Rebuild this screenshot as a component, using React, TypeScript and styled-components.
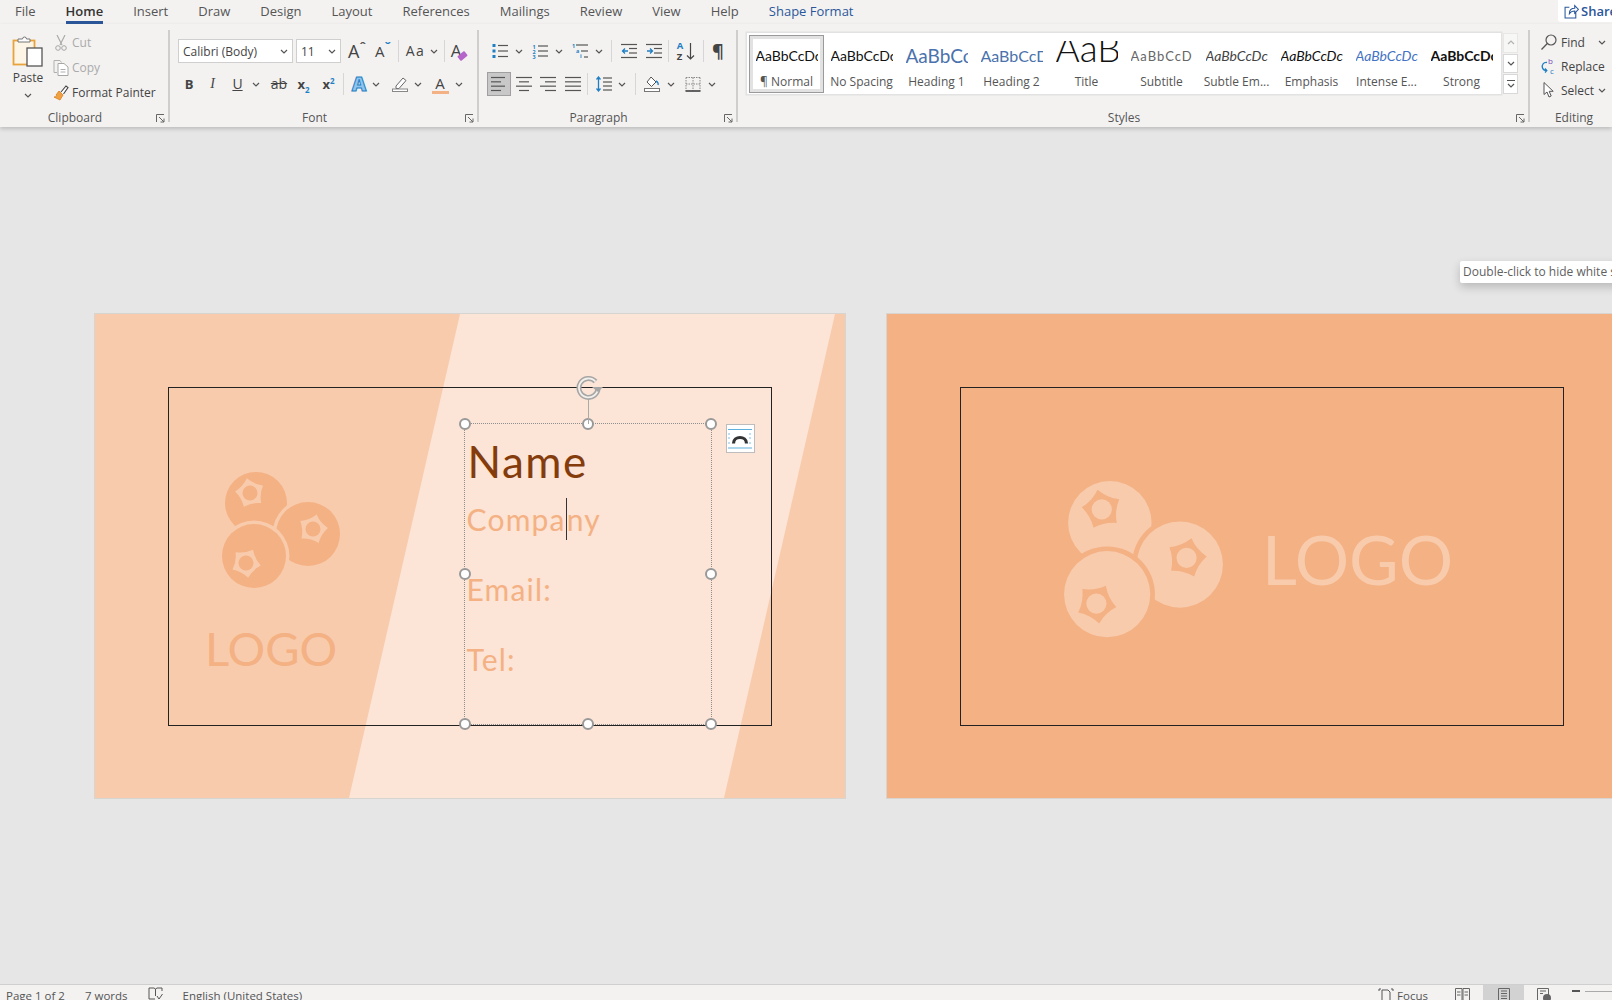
import { ReactNode } from "react";
import styled, { createGlobalStyle } from "styled-components";

const UI = `"Open Sans", "Noto Sans", "Liberation Sans", sans-serif`;
const DOC = `Lato, "Liberation Sans", sans-serif`;

const Global = createGlobalStyle`
    html, body { margin: 0; padding: 0; overflow: hidden; background: #e6e6e6; }
    #root { width: 1612px; height: 1000px; }
    * { box-sizing: border-box; }
`;

const TABS = ["File", "Home", "Insert", "Draw", "Design", "Layout", "References", "Mailings", "Review", "View", "Help"];

const STYLES = [
    { text: "AaBbCcDc", label: "¶ Normal", color: "#111", size: 14 },
    { text: "AaBbCcDc", label: "No Spacing", color: "#111", size: 14 },
    { text: "AaBbCc", label: "Heading 1", color: "#4a72ac", size: 19 },
    { text: "AaBbCcD", label: "Heading 2", color: "#4a72ac", size: 16 },
    { text: "AaB", label: "Title", color: "#111", size: 37, lh: 14, weight: 300 },
    { text: "AaBbCcD", label: "Subtitle", color: "#666", size: 13, spacing: 1 },
    { text: "AaBbCcDc", label: "Subtle Em...", color: "#444", size: 14, italic: true },
    { text: "AaBbCcDc", label: "Emphasis", color: "#111", size: 14, italic: true },
    { text: "AaBbCcDc", label: "Intense E...", color: "#4472c4", size: 14, italic: true },
    { text: "AaBbCcDc", label: "Strong", color: "#111", size: 14, weight: 700 },
];

function Chevron() {
    return (
        <ChevronSvg viewBox="0 0 8 5">
            <path d="M1 1l3 3 3-3" fill="none" stroke="#555" strokeWidth="1.2" />
        </ChevronSvg>
    );
}

function Launcher() {
    return (
        <LauncherSvg viewBox="0 0 9 9">
            <path d="M.5 8V.5H8M3 3l5 5M8 4.5V8H4.5" fill="none" stroke="#666" strokeWidth="1" />
        </LauncherSvg>
    );
}

function Lines({ rows }: { rows: [number, number][] }) {
    return (
        <Icon16 viewBox="0 0 16 16">
            {rows.map(([a, b], i) => (
                <line key={i} x1={a} x2={b} y1={1.5 + i * (13 / (rows.length - 1))} y2={1.5 + i * (13 / (rows.length - 1))} stroke="#555" strokeWidth="1.2" />
            ))}
        </Icon16>
    );
}

function Bullets({ color = "#1f7fc4" }: { color?: string }) {
    return (
        <Icon16 viewBox="0 0 16 16">
            {[2.5, 8, 13.5].map((y) => (
                <g key={y}>
                    <rect x="0.5" y={y - 1.5} width="3" height="3" fill={color} />
                    <line x1="6" x2="16" y1={y} y2={y} stroke="#555" strokeWidth="1.2" />
                </g>
            ))}
        </Icon16>
    );
}

function Numbered() {
    return (
        <Icon16 viewBox="0 0 16 16">
            {[3, 8, 13].map((y, i) => (
                <g key={y}>
                    <SmallNum x="0.5" y={y + 2.5}>{i + 1}</SmallNum>
                    <line x1="6" x2="16" y1={y} y2={y} stroke="#555" strokeWidth="1.2" />
                </g>
            ))}
        </Icon16>
    );
}

function Multilevel() {
    return (
        <Icon16 viewBox="0 0 16 16">
            <SmallNum x="0" y="5">1</SmallNum>
            <SmallNum x="4" y="10">a</SmallNum>
            <SmallNum x="8" y="15">i</SmallNum>
            <line x1="4" x2="16" y1="2" y2="2" stroke="#555" strokeWidth="1.2" />
            <line x1="9" x2="16" y1="8" y2="8" stroke="#555" strokeWidth="1.2" />
            <line x1="12" x2="16" y1="14" y2="14" stroke="#555" strokeWidth="1.2" />
        </Icon16>
    );
}

function Indent({ flip }: { flip?: boolean }) {
    return (
        <Icon16 viewBox="0 0 16 16">
            <line x1="0" x2="16" y1="1.5" y2="1.5" stroke="#555" strokeWidth="1.2" />
            <line x1="8" x2="16" y1="5.5" y2="5.5" stroke="#555" strokeWidth="1.2" />
            <line x1="8" x2="16" y1="10" y2="10" stroke="#555" strokeWidth="1.2" />
            <line x1="0" x2="16" y1="14.5" y2="14.5" stroke="#555" strokeWidth="1.2" />
            <path d={flip ? "M1 8h5M4 5.5L6.5 8 4 10.5" : "M7 8H1.5M4 5.5L1.5 8 4 10.5"} fill="none" stroke="#1f7fc4" strokeWidth="1.3" />
        </Icon16>
    );
}

function LineSpacing() {
    return (
        <Icon16 viewBox="0 0 16 16">
            <path d="M2.5 1v14M.5 3.5l2-2.5 2 2.5M.5 12.500l2 2.500 2-2.500" fill="none" stroke="#1f7fc4" strokeWidth="1.3" />
            {[2, 6, 10, 14].map((y) => (
                <line key={y} x1="7" x2="16" y1={y} y2={y} stroke="#555" strokeWidth="1.2" />
            ))}
        </Icon16>
    );
}

function Shading() {
    return (
        <Icon16 viewBox="0 0 16 16">
            <path d="M7 1l5 5-4.500 4.500L3 6z" fill="#fff" stroke="#555" strokeWidth="1" />
            <path d="M12 5c2 1 2.500 3 2 4" fill="none" stroke="#1f7fc4" strokeWidth="1.4" />
            <rect x="0.500" y="12.500" width="15" height="3" fill="#fff" stroke="#777" />
        </Icon16>
    );
}

function Borders() {
    return (
        <Icon16 viewBox="0 0 16 16">
            <path d="M1 1.500h14M1 1.500v13M15 1.500v13M8 1.500v13M1 8h14" fill="none" stroke="#888" strokeWidth="1" strokeDasharray="1.500 1" />
            <line x1="0.500" x2="15.500" y1="15" y2="15" stroke="#333" strokeWidth="1.500" />
        </Icon16>
    );
}

function Highlighter() {
    return (
        <Icon16 viewBox="0 0 16 16">
            <path d="M4 10l7-8 3 2.500-7 8H4z" fill="#fff" stroke="#666" strokeWidth="1" />
            <rect x="0.500" y="13" width="15" height="2.500" fill="#fff" stroke="#888" />
        </Icon16>
    );
}

function PasteIcon() {
    return (
        <svg width="32" height="32" viewBox="0 0 32 32">
            <rect x="1.500" y="5.500" width="21" height="24" fill="#fdf6e6" stroke="#e9a33c" strokeWidth="1.800" />
            <path d="M6 7V4h4.500a2 2 0 0 1 4 0H18v3z" fill="#fff" stroke="#777" />
            <rect x="15" y="13" width="15" height="18" fill="#fff" stroke="#555" strokeWidth="1.300" />
        </svg>
    );
}

function CutIcon() {
    return (
        <Icon16 viewBox="0 0 16 16">
            <path d="M4 0l5 10M12 0L7 10" fill="none" stroke="#a6a6a6" strokeWidth="1.100" />
            <circle cx="5" cy="13" r="2.300" fill="none" stroke="#a6a6a6" />
            <circle cx="11" cy="13" r="2.300" fill="none" stroke="#a6a6a6" />
        </Icon16>
    );
}

function CopyIcon() {
    return (
        <Icon16 viewBox="0 0 16 16">
            <path d="M1 .500h6l1.500 2M1 .500v12h3" fill="none" stroke="#b0b0b0" />
            <path d="M5 3.500h6l4 3.500v8.500H5z" fill="#fff" stroke="#a6a6a6" />
            <path d="M7.500 9.500h5M7.500 12h5" stroke="#b0b0b0" />
        </Icon16>
    );
}

function PainterIcon() {
    return (
        <Icon16 viewBox="0 0 16 16">
            <path d="M6 6l4 4-3 5-6-3c2 0 3-1 2-2z" fill="#f0a041" stroke="#d87f1c" strokeWidth=".8" />
            <path d="M8 7l5-6 2 1.500-4.500 6.500" fill="#fff" stroke="#444" strokeWidth="1.100" />
        </Icon16>
    );
}

function FindIcon() {
    return (
        <Icon16 viewBox="0 0 16 16">
            <circle cx="10" cy="6" r="5" fill="none" stroke="#555" strokeWidth="1.200" />
            <line x1="6.300" y1="9.500" x2="0.500" y2="15.500" stroke="#555" strokeWidth="1.300" />
        </Icon16>
    );
}

function ReplaceIcon() {
    return (
        <Icon16 viewBox="0 0 16 16">
            <path d="M6 4.500C2.500 4 .5 7 1.500 10c.5 1.500 2 2.500 4 2.500M4 10.500l1.800 2-1.800 2" fill="none" stroke="#1f7fc4" strokeWidth="1.300" />
            <ReplaceLetter x="7" y="6" $color="#7a4fb5">b</ReplaceLetter>
            <ReplaceLetter x="9" y="15.500" $color="#1f7fc4">c</ReplaceLetter>
        </Icon16>
    );
}

function SelectIcon() {
    return (
        <Icon16 viewBox="0 0 16 16">
            <path d="M3 .500v12l3-2.500 2 5 2.200-1-2-4.700h4z" fill="#fff" stroke="#555" strokeWidth="1" />
        </Icon16>
    );
}

function starPath(cx: number, cy: number, R: number, r: number, rot: number) {
    let d = "";
    for (let i = 0; i < 5; i++) {
        const a = ((rot + i * 72 - 90) * Math.PI) / 180;
        const b = a + (36 * Math.PI) / 180;
        const c = a + (72 * Math.PI) / 180;
        d += `${i === 0 ? `M${cx + R * Math.cos(a)} ${cy + R * Math.sin(a)}` : ""}Q${cx + r * Math.cos(b)} ${cy + r * Math.sin(b)} ${cx + R * Math.cos(c)} ${cy + R * Math.sin(c)}`;
    }
    return d + "Z";
}

function Berries({ fg, bg, size }: { fg: string; bg: string; size: number }) {
    const berries = [
        { x: 40, y: 40, r: 31, sx: 34, sy: 30, rot: -12 },
        { x: 92, y: 71, r: 32, sx: 97, sy: 66, rot: 14 },
        { x: 38, y: 93, r: 32, sx: 30, sy: 100, rot: 28 },
    ];
    return (
        <svg width={size} height={size} viewBox="0 0 130 130">
            {berries.map((b) => (
                <g key={b.x + b.y}>
                    <circle cx={b.x} cy={b.y} r={b.r + 3.500} fill={bg} />
                    <circle cx={b.x} cy={b.y} r={b.r} fill={fg} />
                    <path d={starPath(b.sx, b.sy, 15, 9.500, b.rot)} fill={bg} />
                    <circle cx={b.sx} cy={b.sy} r={7.500} fill={fg} />
                </g>
            ))}
        </svg>
    );
}

function Tool({ w, children, chevron, active, gap }: { w: number; children: ReactNode; chevron?: boolean; active?: boolean; gap?: number }) {
    return (
        <ToolBox $w={w} $active={active} $gap={gap ?? (chevron ? 6 : 3)}>
            {children}
            {chevron && <Chevron />}
        </ToolBox>
    );
}

export default function App() {
    return (
        <Word>
            <Global />
            <TabBar>
                {TABS.map((t) => (
                    <Tab key={t} $active={t === "Home"}>{t}</Tab>
                ))}
                <ShapeTab>Shape Format</ShapeTab>
                <ShareButton>
                    <ShareIcon viewBox="0 0 14 14">
                        <path d="M5 3H1v10h10V8M5 9c0-3 2-5 5-5V1.500L13.500 5 10 8.500V6.500C8 6.500 6 7.500 5 9z" fill="none" stroke="#2b579a" />
                    </ShareIcon>
                    Share
                </ShareButton>
            </TabBar>

            <Ribbon>
                <Group $w={170}>
                    <ClipboardBody>
                        <PasteColumn>
                            <PasteIcon />
                            <PasteLabel>Paste</PasteLabel>
                            <Chevron />
                        </PasteColumn>
                        <SmallColumn>
                            <SmallRow $dim><CutIcon />Cut</SmallRow>
                            <SmallRow $dim><CopyIcon />Copy</SmallRow>
                            <SmallRow><PainterIcon />Format Painter</SmallRow>
                        </SmallColumn>
                    </ClipboardBody>
                    <GroupLabel>Clipboard<Launcher /></GroupLabel>
                </Group>

                <Group $w={309}>
                    <Rows>
                        <Row>
                            <Select $w={115}>Calibri (Body)<Chevron /></Select>
                            <Select $w={45}>11<Chevron /></Select>
                            <Tool w={26}><Glyph $size={18}>A</Glyph><Caret2 $color="#555">ˆ</Caret2></Tool>
                            <Tool w={26}><Glyph $size={15}>A</Glyph><Caret2 $color="#1f7fc4">ˇ</Caret2></Tool>
                            <Sep />
                            <Tool w={42} chevron gap={5}><AaGlyph>Aa</AaGlyph></Tool>
                            <Sep $m={1} />
                            <Tool w={26}><Glyph $size={17}>A</Glyph><Eraser /></Tool>
                        </Row>
                        <Row>
                            <Tool w={22}><Glyph $size={13} $weight={700}>B</Glyph></Tool>
                            <Tool w={25}><Glyph $size={14} $italic $serif>I</Glyph></Tool>
                            <Tool w={42} chevron gap={9}><Glyph $size={14} $underline>U</Glyph></Tool>
                            <Tool w={24}><Glyph $size={14} $strike>ab</Glyph></Tool>
                            <Tool w={25}><Glyph $size={13} $weight={700}>x<Sub>2</Sub></Glyph></Tool>
                            <Tool w={25}><Glyph $size={13} $weight={700}>x<Sup>2</Sup></Glyph></Tool>
                            <Sep />
                            <Tool w={40} chevron><OutlineA>A</OutlineA></Tool>
                            <Tool w={41} chevron><Highlighter /></Tool>
                            <Tool w={40} chevron><BarA>A</BarA></Tool>
                        </Row>
                    </Rows>
                    <GroupLabel>Font<Launcher /></GroupLabel>
                </Group>

                <Group $w={259}>
                    <Rows>
                        <Row>
                            <Tool w={40} chevron gap={7}><Bullets /></Tool>
                            <Tool w={40} chevron gap={7}><Numbered /></Tool>
                            <Tool w={40} chevron gap={7}><Multilevel /></Tool>
                            <Sep $m={4} />
                            <Tool w={25}><Indent /></Tool>
                            <Tool w={25}><Indent flip /></Tool>
                            <Sep />
                            <Tool w={30}>
                                <SortLetters><span>A</span><span>Z</span></SortLetters>
                                <svg width="9" height="17" viewBox="0 0 9 17"><path d="M4.500 0v16M1 12.500l3.500 3.500L8 12.500" fill="none" stroke="#444" strokeWidth="1.200" /></svg>
                            </Tool>
                            <Sep />
                            <Tool w={24}><Glyph $size={18} $weight={700}>¶</Glyph></Tool>
                        </Row>
                        <Row>
                            <Tool w={24} active><Lines rows={[[0, 14], [0, 10], [0, 14], [0, 10]]} /></Tool>
                            <Tool w={25}><Lines rows={[[0, 16], [3, 13], [0, 16], [3, 13]]} /></Tool>
                            <Tool w={24}><Lines rows={[[0, 16], [5, 16], [0, 16], [5, 16]]} /></Tool>
                            <Tool w={25}><Lines rows={[[0, 16], [0, 16], [0, 16], [0, 16]]} /></Tool>
                            <Sep />
                            <Tool w={42} chevron><LineSpacing /></Tool>
                            <Sep $m={3} />
                            <Tool w={41} chevron gap={7}><Shading /></Tool>
                            <Tool w={41} chevron gap={7}><Borders /></Tool>
                        </Row>
                    </Rows>
                    <GroupLabel>Paragraph<Launcher /></GroupLabel>
                </Group>

                <Group $w={792}>
                    <StylesBody>
                        <Gallery>
                            {STYLES.map((s, i) => (
                                <StyleItem key={s.label} $selected={i === 0}>
                                    <StylePreview $color={s.color} $size={s.size} $lh={s.lh} $weight={s.weight} $italic={s.italic} $spacing={s.spacing}>
                                        {s.text}
                                    </StylePreview>
                                    <StyleLabel>{s.label}</StyleLabel>
                                </StyleItem>
                            ))}
                        </Gallery>
                        <GalleryScroll>
                            <ScrollBtn $up><Chevron /></ScrollBtn>
                            <ScrollBtn><Chevron /></ScrollBtn>
                            <ScrollBtn $bar><Chevron /></ScrollBtn>
                        </GalleryScroll>
                    </StylesBody>
                    <GroupLabel>Styles<Launcher /></GroupLabel>
                </Group>

                <EditingGroup>
                    <EditingBody>
                        <EditRow><FindIcon />Find<EditChevron><Chevron /></EditChevron></EditRow>
                        <EditRow><ReplaceIcon />Replace</EditRow>
                        <EditRow><SelectIcon />Select<Chevron /></EditRow>
                    </EditingBody>
                    <EditingLabel>Editing</EditingLabel>
                </EditingGroup>
            </Ribbon>

            <Canvas>
                <Tooltip>Double-click to hide white space</Tooltip>
                <Page $bg="#f8cbad">
                    <Band />
                    <Frame>
                        <LogoColumn>
                            <Berries fg="#f4b183" bg="#f8cbad" size={130} />
                            <LogoWord $color="#f4b183" $size={47}>LOGO</LogoWord>
                        </LogoColumn>
                        <TextBox>
                            <NameLine>Name</NameLine>
                            <InfoLine>Compa<Cursor />ny</InfoLine>
                            <InfoLine>Email:</InfoLine>
                            <InfoLine>Tel:</InfoLine>
                            <Handle $x={0} $y={0} />
                            <Handle $x={50} $y={0} />
                            <Handle $x={100} $y={0} />
                            <Handle $x={0} $y={50} />
                            <Handle $x={100} $y={50} />
                            <Handle $x={0} $y={100} />
                            <Handle $x={50} $y={100} />
                            <Handle $x={100} $y={100} />
                            <RotateStem />
                            <RotateHandle viewBox="0 0 28 26">
                                <path d="M20.500 6.500a9.500 9.500 0 1 0 2.500 6" fill="none" stroke="#a6a6a6" strokeWidth="5" />
                                <path d="M20.500 6.500a9.500 9.500 0 1 0 2.500 6" fill="none" stroke="#f3efea" strokeWidth="1.800" />
                                <path d="M17 12l6 5 5-5z" fill="#a6a6a6" />
                            </RotateHandle>
                            <LayoutButton>
                                <svg width="24" height="21" viewBox="0 0 24 21">
                                    <path d="M0 1.500h24M0 20h24" stroke="#5fb0dc" strokeWidth="1.200" />
                                    <path d="M0 6h3M21 6h3M0 10h3M21 10h3M0 15h3M21 15h3" stroke="#7fc0e4" strokeWidth="1" strokeDasharray="2 1" />
                                    <path d="M5.500 15.500c0-8 13-8 13 0" fill="none" stroke="#333" strokeWidth="3.200" />
                                </svg>
                            </LayoutButton>
                        </TextBox>
                    </Frame>
                </Page>

                <Page $bg="#f4b183">
                    <Frame>
                        <LogoRow>
                            <Berries fg="#f8cbad" bg="#f4b183" size={175} />
                            <LogoWord $color="#f8cbad" $size={68}>LOGO</LogoWord>
                        </LogoRow>
                    </Frame>
                </Page>
            </Canvas>

            <StatusBar>
                <StatusLeft>
                    <span>Page 1 of 2</span>
                    <span>7 words</span>
                    <svg width="15" height="14" viewBox="0 0 15 14">
                        <path d="M1 1h5l1.500 1L9 1h5v3M1 1v11h6M7.500 2v7M9 9l2 3 3.500-5" fill="none" stroke="#555" />
                    </svg>
                    <span>English (United States)</span>
                </StatusLeft>
                <StatusRight>
                    <FocusItem>
                        <svg width="16" height="14" viewBox="0 0 16 14">
                            <path d="M1 3V1h2M13 1h2v2M4 2h6l2 2v10H4z" fill="none" stroke="#555" />
                        </svg>
                        Focus
                    </FocusItem>
                    <ViewMode>
                        <svg width="15" height="14" viewBox="0 0 15 14">
                            <path d="M.5.500h6.500v13H.5zM8 .500h6.500v13H8zM2 4h3.500M2 7h3.500M9.500 4H13M9.500 7H13" fill="none" stroke="#666" />
                        </svg>
                    </ViewMode>
                    <ViewMode $active>
                        <svg width="12" height="14" viewBox="0 0 12 14">
                            <path d="M.5.500h11v13H.5zM3 3h6M3 5.500h6M3 8h6M3 10.500h6" fill="none" stroke="#666" />
                        </svg>
                    </ViewMode>
                    <ViewMode>
                        <svg width="15" height="14" viewBox="0 0 15 14">
                            <path d="M.5.500h11v13H.5zM3 3h6M3 5.500h3" fill="none" stroke="#666" />
                            <circle cx="10" cy="10" r="4" fill="#666" />
                        </svg>
                    </ViewMode>
                    <Zoomer><ZoomMinus /><ZoomTrack /></Zoomer>
                </StatusRight>
            </StatusBar>
        </Word>
    );
}

const Word = styled.div`
    width: 1612px;
    height: 1000px;
    display: flex;
    flex-direction: column;
    overflow: hidden;
    font-family: ${UI};
    color: #444;
    background: #e6e6e6;
`;

const TabBar = styled.div`
    height: 24px;
    flex-shrink: 0;
    display: flex;
    align-items: flex-start;
    gap: 30px;
    padding-left: 15px;
    background: #f3f2f1;
    position: relative;
`;

const Tab = styled.div<{ $active?: boolean }>`
    height: 24px;
    line-height: 22px;
    font-size: 13px;
    white-space: nowrap;
    color: ${(p) => (p.$active ? "#333" : "#555")};
    font-weight: ${(p) => (p.$active ? 600 : 400)};
    border-bottom: ${(p) => (p.$active ? "3px solid #2b579a" : "none")};
`;

const ShapeTab = styled(Tab)`
    color: #2b579a;
`;

const ShareButton = styled.div`
    position: absolute;
    right: 0;
    top: 0;
    width: 54px;
    height: 22px;
    padding-left: 6px;
    display: flex;
    align-items: center;
    gap: 2px;
    background: #fff;
    color: #2b579a;
    font-size: 13px;
    font-weight: 600;
    overflow: hidden;
    border-radius: 0 0 0 3px;
`;

const ShareIcon = styled.svg`
    width: 15px;
    height: 15px;
    flex-shrink: 0;
`;

const Ribbon = styled.div`
    height: 103px;
    flex-shrink: 0;
    display: flex;
    padding-top: 6px;
    background: #f3f2f1;
    box-shadow: 0 2px 4px rgba(0, 0, 0, 0.18);
    position: relative;
    z-index: 2;
`;

const Group = styled.div<{ $w: number }>`
    width: ${(p) => p.$w}px;
    height: 92px;
    flex-shrink: 0;
    display: flex;
    flex-direction: column;
    border-right: 2px solid #cfcecd;
`;

const EditingGroup = styled.div`
    flex: 1;
    height: 92px;
    display: flex;
    flex-direction: column;
`;

const GroupLabel = styled.div`
    height: 8px;
    margin-top: auto;
    padding-right: 18px;
    line-height: 8px;
    text-align: center;
    font-size: 12px;
    color: #555;
    position: relative;
    white-space: nowrap;
`;

const EditingLabel = styled(GroupLabel)`
    padding: 0 0 0 6px;
`;

const LauncherSvg = styled.svg`
    position: absolute;
    right: 3px;
    top: 0;
    width: 9px;
    height: 9px;
`;

const ChevronSvg = styled.svg`
    width: 8px;
    height: 5px;
    flex-shrink: 0;
`;

const Icon16 = styled.svg`
    width: 16px;
    height: 16px;
    flex-shrink: 0;
`;

const SmallNum = styled.text`
    font-size: 5.5px;
    font-weight: 700;
    fill: #1f7fc4;
    font-family: ${UI};
`;

const ReplaceLetter = styled.text<{ $color: string }>`
    font-size: 8px;
    font-family: ${UI};
    fill: ${(p) => p.$color};
`;

const ClipboardBody = styled.div`
    display: flex;
    height: 84px;
`;

const PasteColumn = styled.div`
    width: 50px;
    padding: 5px 0 0 6px;
    display: flex;
    flex-direction: column;
    align-items: center;
`;

const PasteLabel = styled.div`
    font-size: 12px;
    color: #444;
    margin: 2px 0 7px;
    line-height: 17px;
`;

const SmallColumn = styled.div`
    display: flex;
    flex-direction: column;
    padding-left: 3px;
`;

const SmallRow = styled.div<{ $dim?: boolean }>`
    height: 25px;
    display: flex;
    align-items: center;
    gap: 3px;
    font-size: 12px;
    white-space: nowrap;
    color: ${(p) => (p.$dim ? "#aaa" : "#444")};
`;

const Rows = styled.div`
    height: 84px;
    padding: 9px 0 0 8px;
    display: flex;
    flex-direction: column;
    gap: 9px;
`;

const Row = styled.div`
    height: 24px;
    display: flex;
    align-items: center;
`;

const Select = styled.div<{ $w: number }>`
    width: ${(p) => p.$w}px;
    height: 24px;
    margin-right: 3px;
    padding: 0 4px;
    display: flex;
    align-items: center;
    justify-content: space-between;
    background: #fff;
    border: 1px solid #cfcfcf;
    font-size: 12px;
    color: #444;
    white-space: nowrap;
`;

const ToolBox = styled.div<{ $w: number; $active?: boolean; $gap: number }>`
    width: ${(p) => p.$w}px;
    height: 24px;
    flex-shrink: 0;
    display: flex;
    align-items: center;
    justify-content: center;
    gap: ${(p) => p.$gap}px;
    background: ${(p) => (p.$active ? "#c8c8c8" : "transparent")};
    border: ${(p) => (p.$active ? "1px solid #a0a0a0" : "none")};
`;

const Sep = styled.div<{ $m?: number }>`
    width: 1px;
    height: 22px;
    margin: 0 ${(p) => p.$m ?? 2}px;
    flex-shrink: 0;
    background: #d6d6d6;
`;

const Glyph = styled.span<{ $size: number; $weight?: number; $italic?: boolean; $serif?: boolean; $underline?: boolean; $strike?: boolean }>`
    font-size: ${(p) => p.$size}px;
    font-weight: ${(p) => p.$weight ?? 400};
    font-style: ${(p) => (p.$italic ? "italic" : "normal")};
    font-family: ${(p) => (p.$serif ? `"Liberation Serif", serif` : UI)};
    text-decoration: ${(p) => (p.$underline ? "underline" : p.$strike ? "line-through" : "none")};
    color: #444;
    line-height: 20px;
    white-space: nowrap;
`;

const AaGlyph = styled.span`
    font-size: 14px;
    letter-spacing: 1.5px;
    line-height: 20px;
    color: #444;
`;

const Caret2 = styled.span<{ $color: string }>`
    font-size: 13px;
    line-height: 20px;
    margin: -8px 0 0 -3px;
    font-weight: 700;
    color: ${(p) => p.$color};
`;

const Eraser = styled.span`
    width: 9px;
    height: 6px;
    margin: 9px 0 0 -6px;
    background: #b565c9;
    transform: rotate(-40deg);
    border-radius: 1px;
`;

const Sub = styled.sub`
    font-size: 8px;
    color: #1f7fc4;
    line-height: 0;
`;

const Sup = styled.sup`
    font-size: 8px;
    color: #1f7fc4;
    line-height: 0;
`;

const OutlineA = styled.span`
    font-size: 20px;
    font-weight: 800;
    line-height: 20px;
    color: #8fc4ee;
    -webkit-text-stroke: 1px #1f7fc4;
`;

const BarA = styled.span`
    font-size: 15px;
    line-height: 16px;
    width: 17px;
    text-align: center;
    color: #444;
    border-bottom: 3px solid #f4b183;
`;

const SortLetters = styled.div`
    display: flex;
    flex-direction: column;
    font-size: 9.5px;
    font-weight: 700;
    line-height: 11px;
    color: #444;
    span:first-child { color: #1f7fc4; }
`;

const StylesBody = styled.div`
    display: flex;
    height: 84px;
    padding: 3px 0 0 9px;
`;

const Gallery = styled.div`
    width: 754px;
    height: 61px;
    padding-left: 2px;
    display: flex;
    align-items: center;
    background: #fff;
    box-shadow: 0 0 0 1.5px #e2e2e2;
`;

const StyleItem = styled.div<{ $selected?: boolean }>`
    width: 75px;
    height: 58px;
    flex-shrink: 0;
    display: flex;
    flex-direction: column;
    align-items: center;
    border: ${(p) => (p.$selected ? "1px solid #9a9a9a" : "1px solid transparent")};
    box-shadow: ${(p) => (p.$selected ? "inset 0 0 0 3px #e2e2e2" : "none")};
`;

const StylePreview = styled.div<{ $color: string; $size: number; $lh?: number; $weight?: number; $italic?: boolean; $spacing?: number }>`
    width: 62px;
    height: 30px;
    margin-top: 5px;
    overflow: hidden;
    white-space: nowrap;
    text-align: center;
    font-family: ${DOC};
    color: ${(p) => p.$color};
    font-size: ${(p) => p.$size}px;
    line-height: ${(p) => p.$lh ?? 30}px;
    font-weight: ${(p) => p.$weight ?? 400};
    font-style: ${(p) => (p.$italic ? "italic" : "normal")};
    letter-spacing: ${(p) => p.$spacing ?? 0}px;
`;

const StyleLabel = styled.div`
    font-size: 12px;
    line-height: 16px;
    margin-top: 3px;
    color: #555;
    white-space: nowrap;
`;

const GalleryScroll = styled.div`
    width: 15px;
    height: 61px;
    margin-left: 2px;
    display: flex;
    flex-direction: column;
    gap: 1px;
`;

const ScrollBtn = styled.div<{ $up?: boolean; $bar?: boolean }>`
    flex: 1;
    display: flex;
    flex-direction: column;
    align-items: center;
    justify-content: center;
    gap: 2px;
    background: #fff;
    border: 1px solid #d8d8d8;
    opacity: ${(p) => (p.$up ? 0.4 : 1)};

    svg {
        transform: ${(p) => (p.$up ? "rotate(180deg)" : "none")};
    }

    &::before {
        content: "";
        display: ${(p) => (p.$bar ? "block" : "none")};
        width: 8px;
        height: 1px;
        background: #555;
    }
`;

const EditingBody = styled.div`
    height: 84px;
    padding-left: 11px;
    display: flex;
    flex-direction: column;
`;

const EditRow = styled.div`
    height: 24px;
    display: flex;
    align-items: center;
    gap: 4px;
    font-size: 12px;
    color: #444;
    white-space: nowrap;
`;

const EditChevron = styled.span`
    margin-left: 9px;
    display: flex;
`;

const Canvas = styled.div`
    flex: 1;
    position: relative;
    display: flex;
    align-items: flex-start;
    gap: 40px;
    padding: 186px 0 0 94px;
    background: #e6e6e6;
    overflow: hidden;
`;

const Tooltip = styled.div`
    position: absolute;
    left: 1460px;
    top: 134px;
    width: 200px;
    height: 22px;
    padding-left: 3px;
    line-height: 21px;
    font-size: 12px;
    color: #5f5f5f;
    white-space: nowrap;
    background: #fff;
    border-radius: 2px;
    box-shadow: 0 4px 10px rgba(0, 0, 0, 0.2);
    z-index: 3;
`;

const Page = styled.div<{ $bg: string }>`
    position: relative;
    width: 752px;
    height: 486px;
    flex-shrink: 0;
    padding: 73px 0 0 73px;
    background: ${(p) => p.$bg};
    border: 1px solid #d8d4d0;
`;

const Band = styled.div`
    position: absolute;
    inset: 0;
    background: #fce4d6;
    clip-path: polygon(365px 0, 740px 0, 629px 100%, 254px 100%);
`;

const Frame = styled.div`
    position: relative;
    width: 604px;
    height: 339px;
    border: 1.5px solid #222;
`;

const LogoColumn = styled.div`
    display: flex;
    flex-direction: column;
    align-items: flex-start;
    padding: 75px 0 0 36px;

    svg {
        margin-left: 11px;
    }
`;

const LogoRow = styled.div`
    display: flex;
    align-items: flex-start;
    gap: 31px;
    padding: 81px 0 0 95px;
`;

const LogoWord = styled.div<{ $color: string; $size: number }>`
    font-family: ${DOC};
    font-size: ${(p) => p.$size}px;
    line-height: ${(p) => Math.round(p.$size * 1.1)}px;
    color: ${(p) => p.$color};
    margin-top: ${(p) => (p.$size > 50 ? 52 : 29)}px;
`;

const TextBox = styled.div`
    position: absolute;
    left: 294.5px;
    top: 35px;
    width: 248.5px;
    height: 302px;
    padding: 13px 0 0 3px;
    border: 1px dotted #8f8f8f;
`;

const NameLine = styled.div`
    height: 47px;
    line-height: 48px;
    font-family: ${DOC};
    font-size: 44px;
    letter-spacing: 1.5px;
    color: #843c0c;
`;

const InfoLine = styled.div`
    height: 70px;
    margin-left: -1px;
    line-height: 70px;
    font-family: ${DOC};
    font-size: 30px;
    letter-spacing: 1.2px;
    color: #f4b183;
    white-space: nowrap;
`;

const Cursor = styled.span`
    display: inline-block;
    width: 0;
    height: 42px;
    vertical-align: -9px;
    border-left: 1.5px solid #333;
`;

const Handle = styled.span<{ $x: number; $y: number }>`
    position: absolute;
    left: ${(p) => p.$x}%;
    top: ${(p) => p.$y}%;
    width: 12px;
    height: 12px;
    margin: -6px 0 0 -6px;
    border-radius: 50%;
    background: #fff;
    border: 2px solid #999;
`;

const RotateStem = styled.span`
    position: absolute;
    left: 50%;
    top: -26px;
    width: 1px;
    height: 26px;
    background: #aaa;
`;

const RotateHandle = styled.svg`
    position: absolute;
    left: calc(50% - 13px);
    top: -49px;
    width: 28px;
    height: 26px;
`;

const LayoutButton = styled.div`
    position: absolute;
    left: 261px;
    top: 0;
    width: 29px;
    height: 29px;
    display: flex;
    align-items: center;
    justify-content: center;
    background: #fff;
    border: 1px solid #bdbdbd;
`;

const StatusBar = styled.div`
    height: 16px;
    flex-shrink: 0;
    display: flex;
    justify-content: space-between;
    overflow: hidden;
    padding-left: 6px;
    background: #f3f2f1;
    border-top: 1px solid #cfcfcf;
    font-size: 11.5px;
    color: #555;
`;

const StatusLeft = styled.div`
    display: flex;
    align-items: flex-start;
    gap: 20px;
    padding-top: 2px;
    line-height: 17px;
    white-space: nowrap;
`;

const StatusRight = styled.div`
    display: flex;
    align-items: flex-start;
`;

const FocusItem = styled.div`
    display: flex;
    align-items: flex-start;
    gap: 3px;
    padding-top: 3px;
    margin-right: 14px;
    line-height: 16px;
`;

const ViewMode = styled.div<{ $active?: boolean }>`
    width: 41px;
    height: 16px;
    padding-top: 3px;
    display: flex;
    justify-content: center;
    align-items: flex-start;
    background: ${(p) => (p.$active ? "#d2d2d2" : "transparent")};
`;

const Zoomer = styled.div`
    width: 47px;
    display: flex;
    align-items: center;
    gap: 5px;
    padding: 0 0 4px 7px;
    height: 16px;
`;

const ZoomMinus = styled.span`
    width: 8px;
    height: 2px;
    background: #555;
`;

const ZoomTrack = styled.span`
    flex: 1;
    height: 1px;
    background: #aaa;
`;
